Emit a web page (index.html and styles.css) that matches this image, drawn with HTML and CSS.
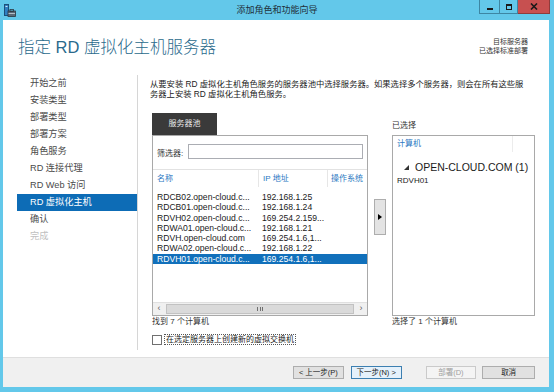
FILE: index.html
```html
<!DOCTYPE html>
<html lang="zh-cn">
<head>
  <meta charset="UTF-8">
  <title>添加角色和功能向导</title>
  <link rel="stylesheet" href="styles.css">
</head>
<body>
  <div class="window">
    <div class="titlebar">
      <div class="app-icon">
        <svg viewBox="0 0 12 13" width="12" height="13">
          <rect x="0.5" y="0.5" width="4" height="11" fill="#2f7fc1" stroke="#1c4f7a"/>
          <rect x="1.5" y="2" width="2" height="1" fill="#cfe6f7"/>
          <rect x="4" y="7" width="7.5" height="5.5" fill="#5a6a78" stroke="#2c3640" stroke-width="0.8"/>
          <rect x="6" y="5.5" width="3.5" height="2" fill="none" stroke="#2c3640" stroke-width="0.8"/>
          <rect x="4.5" y="9" width="6.5" height="0.8" fill="#c9d3dc"/>
        </svg>
      </div>
      <div class="title">添加角色和功能向导</div>
      <div class="controls">
        <div class="ctl ctl-min"><span class="min-bar"></span></div>
        <div class="ctl ctl-max"><span class="max-box"></span></div>
        <div class="ctl ctl-close">
          <svg viewBox="0 0 8 7" width="8" height="7">
            <path d="M1 0.5 L7 6.5 M7 0.5 L1 6.5" stroke="#1a1a1a" stroke-width="1.6"/>
          </svg>
        </div>
      </div>
    </div>

    <div class="client">
      <div class="main">
        <div class="page-head">
          <h1>指定 RD 虚拟化主机服务器</h1>
          <div class="target">
            <div>目标服务器</div>
            <div>已选择标准部署</div>
          </div>
        </div>

        <div class="page-body">
          <div class="nav">
            <div class="nav-item">开始之前</div>
            <div class="nav-item">安装类型</div>
            <div class="nav-item">部署类型</div>
            <div class="nav-item">部署方案</div>
            <div class="nav-item">角色服务</div>
            <div class="nav-item">RD 连接代理</div>
            <div class="nav-item">RD Web 访问</div>
            <div class="nav-item active">RD 虚拟化主机</div>
            <div class="nav-item">确认</div>
            <div class="nav-item disabled">完成</div>
          </div>

          <div class="content">
            <p class="desc">从要安装 RD 虚拟化主机角色服务的服务器池中选择服务器。如果选择多个服务器，则会在所有这些服<br>务器上安装 RD 虚拟化主机角色服务。</p>

            <div class="panes">
              <div class="pane pane-pool">
                <div class="tab">服务器池</div>
                <div class="box">
                  <div class="filter-row">
                    <span class="filter-label">筛选器:</span>
                    <div class="filter-input"></div>
                  </div>
                  <div class="list-head">
                    <div class="col col-name">名称</div>
                    <div class="col col-ip">IP 地址</div>
                    <div class="col col-os">操作系统</div>
                  </div>
                  <div class="rows">
                    <div class="row"><span class="c1">RDCB02.open-cloud.c...</span><span class="c2">192.168.1.25</span></div>
                    <div class="row"><span class="c1">RDCB01.open-cloud.c...</span><span class="c2">192.168.1.24</span></div>
                    <div class="row"><span class="c1">RDVH02.open-cloud.c...</span><span class="c2">169.254.2.159...</span></div>
                    <div class="row"><span class="c1">RDWA01.open-cloud.c...</span><span class="c2">192.168.1.21</span></div>
                    <div class="row"><span class="c1">RDVH.open-cloud.com</span><span class="c2">169.254.1.6,1...</span></div>
                    <div class="row"><span class="c1">RDWA02.open-cloud.c...</span><span class="c2">192.168.1.22</span></div>
                    <div class="row selected"><span class="c1">RDVH01.open-cloud.c...</span><span class="c2">169.254.1.6,1...</span></div>
                  </div>
                  <div class="hscroll">
                    <div class="sb-btn">&lsaquo;</div>
                    <div class="sb-thumb"><span class="grip"></span></div>
                    <div class="sb-btn">&rsaquo;</div>
                  </div>
                </div>
                <div class="count">找到 7 个计算机</div>
              </div>

              <div class="pane-mid">
                <div class="add-btn">
                  <svg viewBox="0 0 4 6" width="4" height="6"><path d="M0 0 L4 3 L0 6 Z" fill="#000"/></svg>
                </div>
              </div>

              <div class="pane pane-selected">
                <div class="sel-label">已选择</div>
                <div class="box">
                  <div class="sel-head"><span>计算机</span></div>
                  <div class="group">
                    <svg viewBox="0 0 5 5" width="5" height="5"><path d="M5 0 L5 5 L0 5 Z" fill="#333"/></svg>
                    <span>OPEN-CLOUD.COM (1)</span>
                  </div>
                  <div class="member">RDVH01</div>
                </div>
                <div class="count">选择了 1 个计算机</div>
              </div>
            </div>

            <div class="check-row">
              <span class="checkbox"></span>
              <span class="check-label">在选定服务器上创建新的虚拟交换机</span>
            </div>
          </div>
        </div>
      </div>

      <div class="footer">
        <div class="btn">&lt; 上一步(P)</div>
        <div class="btn btn-default">下一步(N) &gt;</div>
        <div class="btn btn-disabled">部署(D)</div>
        <div class="btn">取消</div>
      </div>
    </div>
  </div>
</body>
</html>
```

FILE: styles.css
```css
body {
  margin: 0;
  width: 554px;
  height: 392px;
  overflow: hidden;
  background: #63c8ea;
  font-family: "Liberation Sans", "Noto Sans CJK SC", sans-serif;
  color: #222;
}

.window {
  display: flex;
  flex-direction: column;
  height: 392px;
}

/* title bar */
.titlebar {
  height: 20px;
  display: grid;
  grid-template-columns: 1fr auto 1fr;
  align-items: start;
}

.app-icon {
  padding: 4px 0 0 4px;
  height: 13px;
}

.app-icon svg {
  display: block;
}

.title {
  font-size: 9px;
  line-height: 20px;
  color: #1f2f38;
}

.controls {
  justify-self: end;
  display: flex;
  margin-right: 4px;
}

.ctl {
  height: 13px;
  border: 1px solid #3d86a3;
  border-top: 0;
  display: flex;
  align-items: center;
  justify-content: center;
  box-sizing: content-box;
}

.ctl-min {
  width: 19px;
  border-right: 0;
}

.ctl-max {
  width: 17px;
}

.ctl-close {
  width: 31px;
  border-left: 0;
  background: #c75050;
  border-color: #8f3b3b;
}

.min-bar {
  width: 6px;
  height: 2px;
  background: #1a1a1a;
  margin-top: 5px;
}

.max-box {
  width: 4px;
  height: 3px;
  border: 1.5px solid #1a1a1a;
  border-top-width: 2px;
}

/* client area */
.client {
  flex: 1;
  margin: 0 5px 5px 3px;
  background: #fff;
  display: flex;
  flex-direction: column;
}

.main {
  height: 337px;
  display: flex;
  flex-direction: column;
}

.page-head {
  height: 55px;
  display: flex;
  justify-content: space-between;
  align-items: flex-start;
  padding: 0 21px 0 15px;
}

.page-head h1 {
  margin: 16px 0 0;
  font-size: 16.5px;
  line-height: 22px;
  font-weight: 300;
  color: #2a6a8c;
}

.target {
  margin-top: 17px;
  text-align: right;
  font-size: 7px;
  line-height: 9px;
  color: #333;
}

.page-body {
  flex: 1;
  display: flex;
}

/* left navigation */
.nav {
  width: 120px;
  margin: 0 0 7px 14px;
  border-right: 1px solid #d6d6d6;
}

.nav-item {
  height: 17px;
  line-height: 17px;
  padding-left: 13px;
  font-size: 9.2px;
  color: #4a4a4a;
}

.nav-item.active {
  background: #0d6cb6;
  color: #fff;
}

.nav-item.disabled {
  color: #c0c0c0;
}

/* content */
.content {
  flex: 1;
  padding: 4px 14px 0 12px;
}

.desc {
  margin: 0;
  font-size: 8.3px;
  line-height: 10px;
  white-space: nowrap;
  color: #222;
}

.panes {
  display: flex;
  margin: 14px 0 0 2px;
}

.pane {
  display: flex;
  flex-direction: column;
}

.pane-pool {
  width: 216px;
}

.pane-selected {
  flex: 1;
}

.tab {
  width: 65px;
  height: 22px;
  line-height: 22px;
  background: #3a3a3a;
  color: #e8e8e8;
  font-size: 8px;
  text-align: center;
}

.box {
  height: 179px;
  border: 1px solid #a9a9a9;
  display: flex;
  flex-direction: column;
}

.filter-row {
  height: 33px;
  display: flex;
  align-items: center;
  padding: 0 4px;
  border-bottom: 1px solid #e2e2e2;
}

.filter-label {
  font-size: 8px;
  color: #333;
  width: 31px;
}

.filter-input {
  flex: 1;
  height: 13px;
  border: 1px solid #abadb3;
  margin-bottom: 2px;
}

.list-head {
  height: 17px;
  display: flex;
  font-size: 8px;
  color: #2b78c2;
}

.col {
  line-height: 17px;
  padding-left: 4px;
  white-space: nowrap;
  overflow: hidden;
}

.col-name {
  width: 101px;
  border-right: 1px solid #e6e6e6;
}

.col-ip {
  width: 64px;
  border-right: 1px solid #e6e6e6;
}

.col-os {
  flex: 1;
  padding-left: 3px;
}

.rows {
  flex: 1;
  padding-top: 5px;
}

.row {
  height: 10.3px;
  line-height: 10.3px;
  display: flex;
  font-size: 8.6px;
  color: #1a1a1a;
  white-space: nowrap;
}

.row .c1 {
  width: 101px;
  padding-left: 4px;
}

.row .c2 {
  padding-left: 4px;
}

.row.selected {
  background: #1170bb;
  color: #fff;
}

.hscroll {
  height: 12px;
  display: flex;
  border-top: 1px solid #e0e0e0;
  background: #f0f0f0;
}

.sb-btn {
  width: 12px;
  font-size: 9px;
  line-height: 11px;
  text-align: center;
  color: #606060;
}

.sb-thumb {
  flex: 1;
  margin: 1px 1px;
  background: #dadada;
  border: 1px solid #c2c2c2;
  display: flex;
  align-items: center;
  justify-content: center;
}

.grip {
  width: 4px;
  height: 4px;
  border-left: 1px solid #707070;
  border-right: 1px solid #707070;
  position: relative;
}

.grip::after {
  content: "";
  position: absolute;
  left: 1.5px;
  top: 0;
  width: 1px;
  height: 4px;
  background: #707070;
}

.count {
  font-size: 8px;
  line-height: 10px;
  margin-top: 1px;
  color: #333;
}

.pane-mid {
  width: 24px;
}

.add-btn {
  width: 10px;
  height: 34px;
  margin: 86px 0 0 6px;
  background: #e3e3e3;
  border: 1px solid #adadad;
  display: flex;
  align-items: center;
  justify-content: center;
}

.add-btn svg {
  display: block;
}

.sel-label {
  height: 22px;
  line-height: 12px;
  padding-top: 7px;
  box-sizing: border-box;
  font-size: 8px;
  color: #333;
}

.sel-head {
  height: 16px;
  display: flex;
}

.sel-head span {
  width: 115px;
  padding-left: 4px;
  line-height: 16px;
  font-size: 8px;
  color: #2b78c2;
  border-right: 1px solid #ececec;
}

.group {
  display: flex;
  align-items: center;
  gap: 6px;
  margin-top: 8px;
  padding-left: 11px;
  height: 14px;
  font-size: 10.5px;
  color: #1a1a1a;
}

.member {
  padding-left: 4px;
  font-size: 8px;
  line-height: 14px;
  color: #1a1a1a;
}

.check-row {
  display: flex;
  align-items: center;
  margin: 7px 0 0 2px;
}

.checkbox {
  width: 8px;
  height: 8px;
  border: 1px solid #707070;
  background: #fff;
}

.check-label {
  margin-left: 2px;
  padding: 0 1px;
  border: 1px dotted #555;
  font-size: 8px;
  line-height: 9px;
  color: #222;
}

/* footer */
.footer {
  height: 29px;
  border-top: 1px solid #dfdfdf;
  background: #f0f0f0;
  display: flex;
  align-items: center;
  padding: 0 14px 0 290px;
}

.btn {
  width: 49px;
  height: 11px;
  line-height: 11px;
  border: 1px solid #adadad;
  background: #e1e1e1;
  font-size: 7.5px;
  text-align: center;
  color: #222;
  margin-right: 7px;
}

.btn-default {
  background: #e5f1fb;
  border-color: #3c7fb1;
  margin-right: 24px;
}

.btn-disabled {
  background: #f4f4f4;
  border-color: #cacaca;
  color: #a0a0a0;
  margin-right: 6px;
}

.btn:last-child {
  width: 51px;
  margin-right: 0;
}
```
